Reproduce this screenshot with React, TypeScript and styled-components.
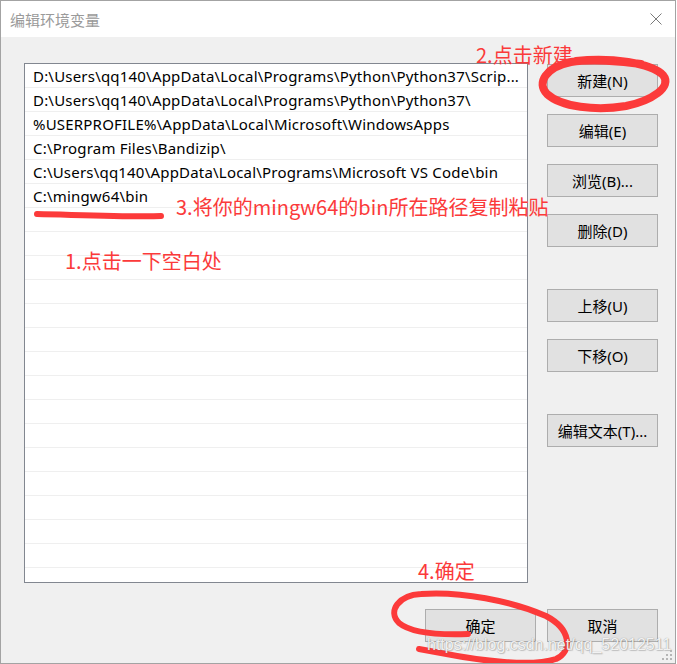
import React from "react";
import styled, { createGlobalStyle } from "styled-components";

const GlobalStyle = createGlobalStyle`
  html, body {
    margin: 0;
    padding: 0;
    background: #ffffff;
  }
  body {
    font-family: "Noto Sans", "Noto Sans CJK SC", sans-serif;
  }
`;

const Dialog = styled.div`
  position: relative;
  width: 676px;
  height: 664px;
  box-sizing: border-box;
  border: 1px solid #a3a3a3;
  background: #f0f0f0;
  display: flex;
  flex-direction: column;
  overflow: hidden;
`;

const TitleBar = styled.div`
  height: 36px;
  flex: none;
  background: #ffffff;
  display: flex;
  align-items: center;
  justify-content: space-between;
  padding: 0 13px 0 9px;
`;

const Title = styled.span`
  font-family: "Noto Sans CJK SC", sans-serif;
  font-size: 15px;
  color: #9a9a9a;
`;

const Body = styled.div`
  flex: 1;
  padding: 26px 17px 0 23px;
  display: flex;
  flex-direction: column;
`;

const Main = styled.div`
  display: flex;
  gap: 19px;
`;

const PathList = styled.div`
  width: 504px;
  height: 520px;
  box-sizing: border-box;
  border: 1px solid #828790;
  background: #ffffff;
  overflow: hidden;
`;

const PathRow = styled.div`
  height: 24px;
  box-sizing: border-box;
  border-bottom: 1px solid #efefef;
  padding: 2px 0 0 8px;
  font-size: 15px;
  letter-spacing: 0.2px;
  line-height: 21px;
  color: #000000;
  white-space: nowrap;
`;

const ButtonColumn = styled.div`
  display: flex;
  flex-direction: column;
  gap: 42px;
  padding-top: 1px;
`;

const ButtonGroup = styled.div`
  display: flex;
  flex-direction: column;
  gap: 17px;
`;

const Button = styled.button`
  width: 111px;
  height: 33px;
  box-sizing: border-box;
  border: 1px solid #adadad;
  background: #e1e1e1;
  color: #000000;
  font-family: "Noto Sans", "Noto Sans CJK SC", sans-serif;
  font-size: 15px;
  padding: 0;
  display: flex;
  align-items: center;
  justify-content: center;
`;

const Footer = styled.div`
  margin-top: 26px;
  display: flex;
  justify-content: flex-end;
  gap: 11px;
`;

const Note = styled.div<{ $x: number; $y: number }>`
  position: absolute;
  left: ${(p) => p.$x}px;
  top: ${(p) => p.$y}px;
  font-family: "Noto Sans CJK SC", sans-serif;
  font-size: 20px;
  line-height: 20px;
  color: #fb3a3a;
  white-space: nowrap;
`;

const Marks = styled.svg`
  position: absolute;
  left: 0;
  top: 0;
  pointer-events: none;
`;

const Watermark = styled.div`
  position: absolute;
  left: 426px;
  top: 635px;
  font-family: "Liberation Sans", sans-serif;
  font-size: 16px;
  color: rgba(255, 255, 255, 0.9);
  text-shadow: 0 0 1px rgba(80, 80, 80, 0.6), 1px 1px 1px rgba(120, 120, 120, 0.35);
  white-space: nowrap;
`;

const Grip = styled.svg`
  position: absolute;
  right: 2px;
  bottom: 2px;
`;

const paths = [
  "D:\\Users\\qq140\\AppData\\Local\\Programs\\Python\\Python37\\Scrip...",
  "D:\\Users\\qq140\\AppData\\Local\\Programs\\Python\\Python37\\",
  "%USERPROFILE%\\AppData\\Local\\Microsoft\\WindowsApps",
  "C:\\Program Files\\Bandizip\\",
  "C:\\Users\\qq140\\AppData\\Local\\Programs\\Microsoft VS Code\\bin",
  "C:\\mingw64\\bin",
];

const rows = [...paths, ...Array(16).fill("")];

export default function App() {
  return (
    <>
      <GlobalStyle />
      <Dialog>
        <TitleBar>
          <Title>编辑环境变量</Title>
          <svg width="12" height="12" viewBox="0 0 12 12">
            <path d="M0.5 0.5 L11.5 11.5 M11.5 0.5 L0.5 11.5" stroke="#7a7a7a" strokeWidth="1" fill="none" />
          </svg>
        </TitleBar>
        <Body>
          <Main>
            <PathList>
              {rows.map((text, i) => (
                <PathRow key={i}>{text}</PathRow>
              ))}
            </PathList>
            <ButtonColumn>
              <ButtonGroup>
                <Button>新建(N)</Button>
                <Button>编辑(E)</Button>
                <Button>浏览(B)...</Button>
                <Button>删除(D)</Button>
              </ButtonGroup>
              <ButtonGroup>
                <Button>上移(U)</Button>
                <Button>下移(O)</Button>
              </ButtonGroup>
              <ButtonGroup>
                <Button>编辑文本(T)...</Button>
              </ButtonGroup>
            </ButtonColumn>
          </Main>
          <Footer>
            <Button>确定</Button>
            <Button>取消</Button>
          </Footer>
        </Body>

        <Marks width="676" height="664" viewBox="0 0 676 664">
          <g fill="none" stroke="#fc3a3a" strokeLinecap="round" strokeLinejoin="round">
            <path
              d="M575 60 C610 56, 650 62, 662 74 C672 86, 650 100, 625 105 C595 110, 560 106, 546 93 C535 82, 545 66, 570 61 C590 58, 620 60, 640 63"
              strokeWidth="8"
            />
            <path d="M36 213 C80 214, 130 216, 160 215" strokeWidth="6" />
            <path
              d="M467 633 C440 634, 410 632, 398 622 C386 610, 398 594, 420 593 C460 590, 510 600, 545 615 C570 628, 572 650, 555 658 C530 666, 480 660, 440 652 L418 648"
              strokeWidth="6"
            />
          </g>
        </Marks>

        <Note $x={475} $y={44}>2.点击新建</Note>
        <Note $x={175} $y={196}>3.将你的mingw64的bin所在路径复制粘贴</Note>
        <Note $x={64} $y={250}>1.点击一下空白处</Note>
        <Note $x={417} $y={560}>4.确定</Note>

        <Watermark>https://blog.csdn.net/qq_52012511</Watermark>

        <Grip width="12" height="12" viewBox="0 0 12 12">
          <g fill="#b5b5b5">
            <rect x="9" y="1" width="2" height="2" />
            <rect x="5" y="5" width="2" height="2" />
            <rect x="9" y="5" width="2" height="2" />
            <rect x="1" y="9" width="2" height="2" />
            <rect x="5" y="9" width="2" height="2" />
            <rect x="9" y="9" width="2" height="2" />
          </g>
        </Grip>
      </Dialog>
    </>
  );
}
